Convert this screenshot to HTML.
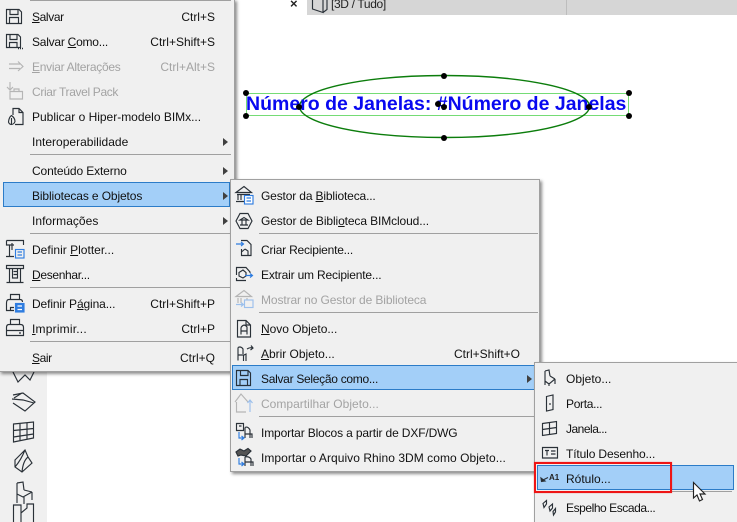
<!DOCTYPE html>
<html><head><meta charset="utf-8">
<style>
html,body{margin:0;padding:0;background:#fff}
#p{position:relative;width:737px;height:522px;overflow:hidden;background:#fff;font:12px "Liberation Sans",sans-serif;color:#111}
.a{position:absolute}
.m{position:absolute;background:#f0f0f0;border:1px solid #a0a0a0;box-shadow:2px 2px 3px rgba(0,0,0,.45);box-sizing:border-box}
.t{position:absolute;white-space:nowrap;line-height:14px;height:14px}
.r{position:absolute;white-space:nowrap;line-height:14px;height:14px;text-align:right}
.d{color:#a3a3a3}
.s{position:absolute;height:1px;background:#a0a0a0}
.h{position:absolute;background:#a3cff8;border:1px solid #2c7cc8;box-sizing:border-box}
.ar{position:absolute;width:0;height:0;border-left:5px solid #404040;border-top:4px solid transparent;border-bottom:4px solid transparent}
svg{position:absolute;overflow:visible;left:0;top:0}
svg *{fill:none;stroke:#2a3138;stroke-width:1.15}
svg .b{stroke:#2f7de0}
svg .g{stroke:#b5b5b5}
svg .lb{stroke:#9cc0ec}
svg .w{fill:#f0f0f0}
</style></head><body><div id="p">

<!-- top bar -->
<div class="a" style="left:307px;top:0;width:430px;height:15px;background:#d6d6d6"></div>
<div class="a" style="left:566px;top:0;width:1px;height:15px;background:#bdbdbd"></div>
<div class="a" style="left:290px;top:-3px;font:bold 13px 'Liberation Sans',sans-serif;color:#222;line-height:14px">×</div>
<div class="t" style="left:331px;top:-3px;color:#222;letter-spacing:-.35px">[3D / Tudo]</div>

<!-- left toolbar -->
<div class="a" style="left:0;top:370px;width:47px;height:152px;background:#f0f0f0"></div>
<svg width="737" height="522">
<path d="M3 0V0M312.500 0V9L323 12.500V0M323 12.500L327 9.500V0"/>
<path d="M13 372L18 382L25 375L30 380L34 372"/>
<path d="M13 395L23 393L35 402L25 411L13 403M12 399L23 400L34 403M22 393L14 398"/>
<path d="M13.500 424L33.500 422V438L13.500 442ZM13.500 430.500L33.500 428.500M13.500 437L33.500 434M20 423.500V441M27 423V439.500"/>
<path d="M15 460L25 450L28 457L32 463L22 472L15 467ZM15 467Q21 460 25 450M22 472Q23 461 28 457"/>
<path d="M17 483L23 482L24 490M17 483V494M17 494L23 497L32 492M24 490L32 492M17 494V503M24 497V504M32 492V500"/>
<path d="M13.500 522V505H21V513L27 508V504H33.500V522M21 513V522"/>
</svg>

<!-- canvas -->
<div class="a" style="left:246px;top:93px;width:383px;height:23px;border:1px solid #75dc75;box-sizing:border-box"></div>
<svg width="737" height="522"><ellipse cx="444.500" cy="106.500" rx="145" ry="31" style="stroke:#0c7d0c;stroke-width:1.400"/></svg>
<div class="a" style="left:246px;top:92px;font:bold 19.500px/24px 'Liberation Sans',sans-serif;color:#0808f0;white-space:nowrap">Número de Janelas: #Número de Janelas</div>
<svg width="737" height="522">
<circle cx="246" cy="93" r="3" style="fill:#000;stroke:none"/><circle cx="629" cy="93" r="3" style="fill:#000;stroke:none"/>
<circle cx="246" cy="116" r="3" style="fill:#000;stroke:none"/><circle cx="629" cy="116" r="3" style="fill:#000;stroke:none"/>
<circle cx="444" cy="76" r="3" style="fill:#000;stroke:none"/><circle cx="444" cy="138" r="3" style="fill:#000;stroke:none"/>
<circle cx="299" cy="107" r="3" style="fill:#000;stroke:none"/><circle cx="589" cy="107" r="3" style="fill:#000;stroke:none"/>
<circle cx="444" cy="107" r="3" style="fill:#000;stroke:none"/><circle cx="438" cy="104" r="3" style="fill:#000;stroke:none"/>
</svg>

<!-- menu 1 -->
<div class="m" style="left:-1px;top:-1px;width:236px;height:373px"></div>
<div class="s" style="left:30px;top:0;width:201px"></div>
<div class="h" style="left:3px;top:182px;width:227px;height:25px"></div>
<div class="s" style="left:30px;top:154px;width:201px"></div>
<div class="s" style="left:30px;top:233px;width:200px"></div>
<div class="s" style="left:30px;top:287px;width:200px"></div>
<div class="s" style="left:30px;top:341px;width:200px"></div>

<div class="t" style="left:32px;top:10px;letter-spacing:-.38px"><u>S</u>alvar</div><div class="r" style="right:522px;top:10px">Ctrl+S</div>
<div class="t" style="left:32px;top:35px;letter-spacing:-.24px">Salvar <u>C</u>omo...</div><div class="r" style="right:522px;top:35px">Ctrl+Shift+S</div>
<div class="t d" style="left:32px;top:60px;letter-spacing:-.29px"><u>E</u>nviar Alterações</div><div class="r d" style="right:522px;top:60px">Ctrl+Alt+S</div>
<div class="t d" style="left:32px;top:85px;letter-spacing:-.35px">Criar Travel Pack</div>
<div class="t" style="left:32px;top:110px;letter-spacing:-.01px">Publicar o Hiper-modelo BIMx...</div>
<div class="t" style="left:32px;top:135px;letter-spacing:.01px">Interoperabilidade</div><div class="ar" style="left:223px;top:138px"></div>
<div class="t" style="left:32px;top:164px;letter-spacing:-.13px">Conteúdo Externo</div><div class="ar" style="left:223px;top:167px"></div>
<div class="t" style="left:32px;top:189px;letter-spacing:-.12px">Bibliotecas e Objetos</div><div class="ar" style="left:223px;top:192px"></div>
<div class="t" style="left:32px;top:214px;letter-spacing:.03px">Informações</div><div class="ar" style="left:223px;top:217px"></div>
<div class="t" style="left:32px;top:243px;letter-spacing:.01px">Definir <u>P</u>lotter...</div>
<div class="t" style="left:32px;top:268px;letter-spacing:-.33px"><u>D</u>esenhar...</div>
<div class="t" style="left:32px;top:297px;letter-spacing:-.12px">Definir P<u>á</u>gina...</div><div class="r" style="right:522px;top:297px">Ctrl+Shift+P</div>
<div class="t" style="left:32px;top:322px;letter-spacing:.2px"><u>I</u>mprimir...</div><div class="r" style="right:522px;top:322px">Ctrl+P</div>
<div class="t" style="left:32px;top:351px;letter-spacing:-.4px"><u>S</u>air</div><div class="r" style="right:522px;top:351px">Ctrl+Q</div>

<svg width="737" height="522">
<path d="M6.500 9.500H19L21.500 12V23.500H6.500ZM10 9.500V14.500H18V9.500M9.500 23.500V17.500H18.500V23.500"/>
<path d="M6.500 34.500H18L20.500 37V47.500H6.500ZM10 34.500V39.500H17V34.500M9.500 47.500V42.500H17V47.500"/>
<path d="M18 48.500H23.500" style="stroke-dasharray:1 1;stroke-width:1.400"/>
<path class="g" d="M9 64H20M9 68.500H20M18 61.500L23 66.500L18 71"/>
<path class="g" d="M10 82V90M7 87L10 90L13 87M10 91.500H22.500V99H10ZM14 91.500V89H19V91.500"/>
<path d="M13 115V108.500H19L23 112.500V124.500H15M19 108.500V112.500H23"/>
<path d="M8.500 122Q9 117 11.500 115.500Q15 118 15 121.500Q14 124.500 11 124.500Q9 124 8.500 122ZM11.500 118V124"/>
<path d="M6.500 240.500H23.500V245M6.500 240.500V245H14M9.500 245V256.500M6 256.500H14M12 243V250"/>
<rect class="b" x="15.500" y="249.500" width="8.500" height="8.500"/>
<path class="b" d="M17.500 252H22M17.500 255H22"/>
<path d="M6.500 265.500H23.500V268.500H6.500ZM9.500 268.500V282.500M20.500 268.500V282.500M6.500 282.500H23.500M12.500 268.500V278H17.500V268.500M13.500 271.500H17M13.500 274.500H17"/>
<path d="M10.500 299.500V294.500H19.500V299.500M6.500 303Q6.500 299.500 9 299.500H20Q22.500 299.500 22.500 302M6.500 303V310.500H14M10.500 310.500V307.500H14"/>
<rect class="b" x="15.500" y="303.500" width="8.500" height="8.500" style="fill:#2f7de0"/>
<path d="M17.500 306H22M17.500 309.500H22" style="stroke:#fff"/>
<path d="M10.500 324.500V319.500H19.500V324.500M6.500 327.500Q6.500 324.500 9 324.500H20.500Q23.500 324.500 23.500 327.500V335.500H6.500ZM6.500 330.500H23.500M19 333H21"/>
</svg>

<!-- menu 2 -->
<div class="m" style="left:230px;top:179px;width:310px;height:293px"></div>
<div class="s" style="left:259px;top:233px;width:279px"></div>
<div class="s" style="left:259px;top:312px;width:279px"></div>
<div class="s" style="left:259px;top:416px;width:279px"></div>
<div class="h" style="left:232px;top:365px;width:306px;height:25px"></div>

<div class="t" style="left:261px;top:189px;letter-spacing:-.15px">Gestor da <u>B</u>iblioteca...</div>
<div class="t" style="left:261px;top:214px;letter-spacing:-.11px">Gestor de Bibli<u>o</u>teca BIMcloud...</div>
<div class="t" style="left:261px;top:243px;letter-spacing:-.21px">Criar Recipiente...</div>
<div class="t" style="left:261px;top:268px;letter-spacing:-.18px">Extrair um Recipiente...</div>
<div class="t d" style="left:261px;top:293px;letter-spacing:-.11px">Mostrar no Gestor de Biblioteca</div>
<div class="t" style="left:261px;top:322px;letter-spacing:-.03px"><u>N</u>ovo Objeto...</div>
<div class="t" style="left:261px;top:347px;letter-spacing:-.02px"><u>A</u>brir Objeto...</div><div class="r" style="right:217px;top:347px">Ctrl+Shift+O</div>
<div class="t" style="left:261px;top:372px;letter-spacing:-.29px">Salvar Seleção como...</div><div class="ar" style="left:527px;top:375px"></div>
<div class="t d" style="left:261px;top:397px;letter-spacing:.02px">Compartilhar Objeto...</div>
<div class="t" style="left:261px;top:426px;letter-spacing:-.14px">Importar Blocos a partir de DXF/DWG</div>
<div class="t" style="left:261px;top:451px;letter-spacing:.05px">Importar o Arquivo Rhino 3DM como Objeto...</div>

<svg width="737" height="522">
<path d="M236 192.500L244 186.500L251.500 192.500ZM237 194.500H250M238 195V200M241 195V200M236 201.500H244"/>
<rect class="b" x="244.500" y="195.500" width="8.500" height="8.500" style="fill:#fff"/>
<path class="b" d="M246.500 198H251M246.500 201H251"/>
<path d="M240 213.500H248L252 221L248 228.500H240L236 221ZM240 220L244 217.500L248 220ZM240 225H248M242 220.500V224.500M246 220.500V224.500"/>
<path d="M241 240.500H247L251 244.500V255.500H241.500V249M245 249L248 251V255M241.500 252L245 249"/>
<path class="b" d="M236 244H243M241 242L243.500 244L241 246"/>
<path d="M236.500 275V267.500H246L250 272V273M236.500 278V280.500H246M239 272.500L243 270L246 272.500V276L243 278L239 276Z"/>
<path class="b" d="M245 275.500H252M250 273.500L252.500 275.500L250 277.500"/>
<path class="g" d="M236 296.500L244 290.500L251.500 296.500ZM238 298V303M241 298V303M247 298V300"/>
<rect class="lb" x="244.500" y="300" width="8.500" height="7.500"/>
<path class="lb" d="M236 304.500H243M241 302.500L243.500 304.500L241 306.500"/>
<path d="M237.500 320.500H246L250.500 325V337H237.500ZM246 320.500V325H250.500M241 327.500Q244 323 247 327V334.500M241 327.500V334.500M241 331H247"/>
<path d="M238 347.500Q241 346 243 349V354M238 347.500V360.500M238 355H244L246 354V361M243.500 355V361M247 349Q250 347 253 348M251 345.500L253 348L250.500 350"/>
<path d="M236.500 370.500H248L250.500 373V385.500H236.500ZM240.500 370.500V375.500H248V370.500M240 385.500V379.500H247.500V385.500" style="stroke:#27313a"/>
<path class="g" d="M235 402L241 394L248 402M236.500 402V412H246"/>
<path class="lb" d="M250 412V401M247.500 403L250 400L252.500 403"/>
<path d="M236.500 423.500H243.500V430.500H236.500ZM239 426H241.500M245 427.500V438M245 427.500Q248 426 250 430V434M245 434H252V438M250 434V438"/>
<path class="b" d="M239 432V438H243.500M241.500 436L244 438L241.500 440"/>
<path d="M236 452L240 449L244 451L248 448.500L251 451L246 456L241 455L238 456Z" style="fill:#555"/>
<path d="M245 457V466M245 457Q249 456 251 459V462M245 462H253V466M251 462V466"/>
<path class="b" d="M239 458V464H243.500M241.500 462L244 464L241.500 466"/>
</svg>

<!-- menu 3 -->
<div class="m" style="left:534px;top:362px;width:204px;height:170px"></div>
<div class="h" style="left:537px;top:465px;width:197px;height:25px"></div>
<div class="s" style="left:566px;top:491px;width:166px"></div>
<div class="t" style="left:566px;top:372px">Objeto...</div>
<div class="t" style="left:566px;top:397px;letter-spacing:-.31px">Porta...</div>
<div class="t" style="left:566px;top:422px;letter-spacing:-.5px">Janela...</div>
<div class="t" style="left:566px;top:447px;letter-spacing:-.13px">Título Desenho...</div>
<div class="t" style="left:566px;top:472px">Rótulo...</div>
<div class="t" style="left:566px;top:501px;letter-spacing:-.44px">Espelho Escada...</div>

<svg width="737" height="522">
<path d="M545 371L549 370L550 376M545 371V381M545 381L549 384L555 379M550 376L555 379M545 381V385M549 384V386M555 379V384"/>
<path d="M546.500 396.500L553 395V409.500L546.500 411ZM550 403V405"/>
<path d="M542.500 423.500L556.500 421.500V433.500L542.500 435.500ZM542.500 429.500L556.500 427.500M549.500 422.500V434.500"/>
<path d="M542.500 447.500H557.500V458H542.500ZM545 450.500H549M547 450.500V455.500M551 451H555.500M551 454H555.500"/>
<path d="M543 480L548 477.500"/>
<path d="M541 478L541.500 481.500L545 481Z" style="fill:#222"/>
<path d="M543 503.500L546.500 500.500V504L544 507.500ZM549 507L552.500 504V508L550 511ZM553 511.500L555.500 508.500V512L553.500 515Z"/>
</svg>
<div class="a" style="left:549px;top:473px;font:bold 8px/10px 'Liberation Sans',sans-serif;color:#222">A1</div>

<!-- red box -->
<div class="a" style="left:534px;top:462px;width:138px;height:31px;border:2px solid #ee1515;box-sizing:border-box;box-shadow:0 0 1px rgba(240,16,16,.5)"></div>

<!-- cursor -->
<svg width="737" height="522"><path d="M693.500 482.500V498L697 495L699.500 501L702.500 499.500L700 494H705Z" style="fill:#fff;stroke:#222"/></svg>

</div></body></html>
